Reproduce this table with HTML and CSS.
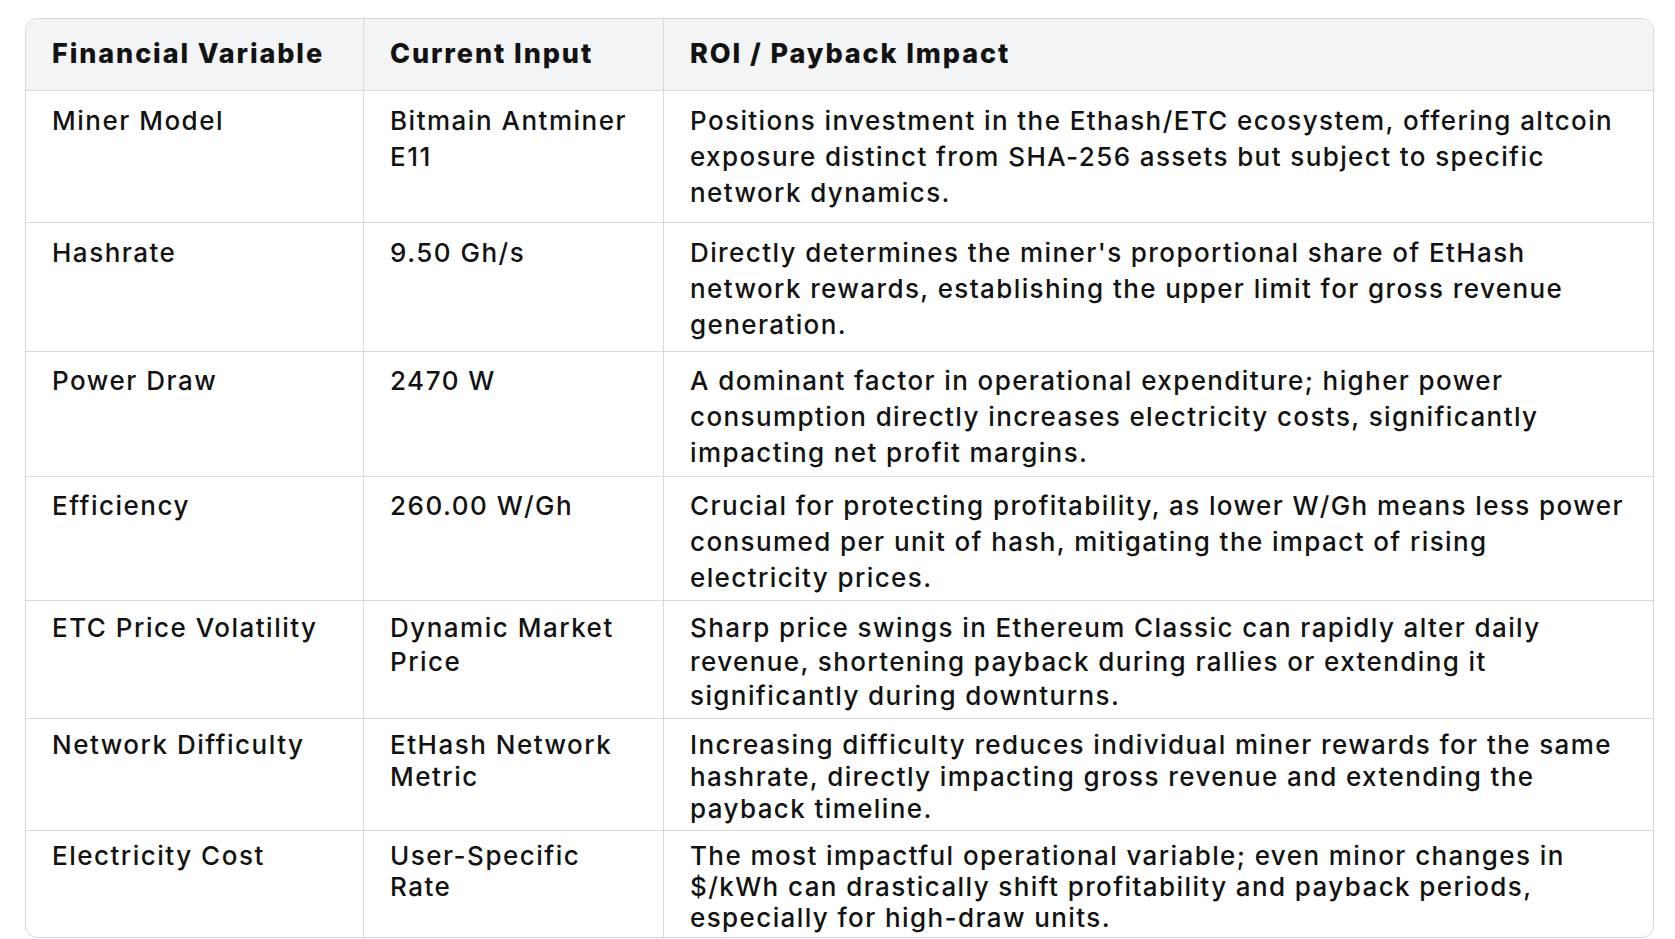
FILE: index.html
```html
<!DOCTYPE html>
<html lang="en">
<head>
<meta charset="utf-8">
<title>Financial Variables</title>
<link rel="stylesheet" href="styles.css">
</head>
<body>
<div class="page">
  <table class="fin-table">
    <colgroup>
      <col class="c-var">
      <col class="c-input">
      <col class="c-impact">
    </colgroup>
    <thead>
      <tr>
        <th>Financial Variable</th>
        <th>Current Input</th>
        <th>ROI / Payback Impact</th>
      </tr>
    </thead>
    <tbody>
      <tr class="row-a">
        <td>Miner Model</td>
        <td>Bitmain Antminer<br>E11</td>
        <td class="impact">Positions investment in the Ethash/ETC ecosystem, offering altcoin<br>exposure distinct from SHA-256 assets but subject to specific<br>network dynamics.</td>
      </tr>
      <tr class="row-b">
        <td>Hashrate</td>
        <td>9.50 Gh/s</td>
        <td class="impact">Directly determines the miner's proportional share of EtHash<br>network rewards, establishing the upper limit for gross revenue<br>generation.</td>
      </tr>
      <tr class="row-c">
        <td>Power Draw</td>
        <td>2470 W</td>
        <td class="impact">A dominant factor in operational expenditure; higher power<br>consumption directly increases electricity costs, significantly<br>impacting net profit margins.</td>
      </tr>
      <tr class="row-d">
        <td>Efficiency</td>
        <td>260.00 W/Gh</td>
        <td class="impact">Crucial for protecting profitability, as lower W/Gh means less power<br>consumed per unit of hash, mitigating the impact of rising<br>electricity prices.</td>
      </tr>
      <tr class="row-e">
        <td>ETC Price Volatility</td>
        <td>Dynamic Market<br>Price</td>
        <td class="impact">Sharp price swings in Ethereum Classic can rapidly alter daily<br>revenue, shortening payback during rallies or extending it<br>significantly during downturns.</td>
      </tr>
      <tr class="row-f">
        <td>Network Difficulty</td>
        <td>EtHash Network<br>Metric</td>
        <td class="impact">Increasing difficulty reduces individual miner rewards for the same<br>hashrate, directly impacting gross revenue and extending the<br>payback timeline.</td>
      </tr>
      <tr class="row-g">
        <td>Electricity Cost</td>
        <td>User-Specific<br>Rate</td>
        <td class="impact">The most impactful operational variable; even minor changes in<br>$/kWh can drastically shift profitability and payback periods,<br>especially for high-draw units.</td>
      </tr>
    </tbody>
  </table>
</div>
</body>
</html>
```

FILE: styles.css
```css
html, body {
  margin: 0;
  padding: 0;
  background: #ffffff;
}

body {
  font-family: "Inter", "Liberation Sans", sans-serif;
  color: #121212;
}

.page {
  padding: 18px 23px 0 25px;
}

.fin-table {
  width: 1627px;
  border-collapse: separate;
  border-spacing: 0;
  border: 1.5px solid #d7d7d7;
  border-radius: 12px;
  overflow: hidden;
  table-layout: fixed;
}

.c-var { width: 338px; }
.c-input { width: 300px; }
.c-impact { width: 989px; }

.fin-table th,
.fin-table td {
  text-align: left;
  vertical-align: top;
  border-right: 1.5px solid #d9d9d9;
  border-bottom: 1.5px solid #d9d9d9;
  padding-left: 26px;
  padding-right: 8px;
  white-space: nowrap;
}

.fin-table th:last-child,
.fin-table td:last-child {
  border-right: none;
}

.fin-table tbody tr:last-child td {
  border-bottom: none;
}

.fin-table th {
  background: #f3f4f6;
  font-weight: 800;
  font-size: 27px;
  letter-spacing: 1.9px;
  line-height: 36px;
  padding-top: 17px;
  padding-bottom: 18px;
}

.fin-table td {
  font-weight: 500;
  font-size: 26px;
  letter-spacing: 1.5px;
  line-height: 36px;
}

.fin-table td.impact {
  letter-spacing: 1.4px;
}

.row-a td { padding-top: 12px; padding-bottom: 11px; }
.row-b td { padding-top: 12px; padding-bottom: 8px; }
.row-c td { padding-top: 11px; padding-bottom: 5px; }
.row-d td { padding-top: 11px; padding-bottom: 4px; }
.row-e td { padding-top: 10px; padding-bottom: 5px; line-height: 34px; }
.row-f td { padding-top: 10px; padding-bottom: 5px; line-height: 32px; }
.row-g td { padding-top: 9px; padding-bottom: 4px; line-height: 31px; }
```
